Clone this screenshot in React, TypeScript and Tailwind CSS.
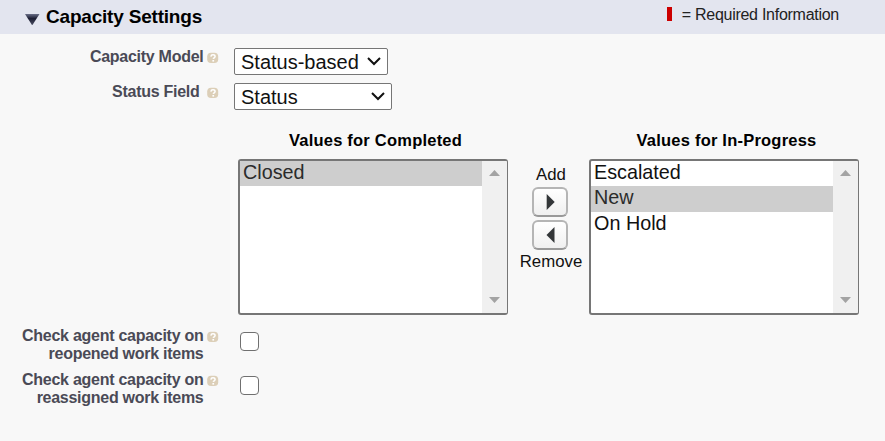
import type { ReactNode } from "react";

function Help() {
  return (
    <svg width="12" height="12" viewBox="0 0 12 12" className="block shrink-0">
      <rect x="0.2" y="0.8" width="11" height="10.2" rx="3.8" fill="#dccfb8" />
      <path d="M3.9 4.6c.1-1.2 1-1.8 2.1-1.8 1.3 0 2.1.6 2.1 1.7 0 1.3-1.7 1.3-1.8 2.4" fill="none" stroke="#fff" strokeWidth="1.5" />
      <rect x="5.4" y="8" width="1.7" height="1.6" fill="#fff" />
    </svg>
  );
}

function Label({ children }: { children: ReactNode }) {
  return (
    <div className="flex w-[219px] shrink-0 justify-end gap-[3.5px]">
      <div className="text-right text-[16px] leading-[18px] font-bold tracking-[-0.27px] whitespace-nowrap text-[#4a4a56]">{children}</div>
      <div className="mt-[4px]">
        <Help />
      </div>
    </div>
  );
}

function Select({ value, width }: { value: string; width: string }) {
  return (
    <div className={`flex h-[27px] items-center justify-between rounded-[2px] border border-[#767676] bg-white pr-[6px] pl-[6px] text-[20px] leading-[25px] text-[#111] ${width}`}>
      <span className="mt-px whitespace-nowrap">{value}</span>
      <svg width="14" height="10" viewBox="0 0 14 10" className="mb-[2px] block shrink-0">
        <path d="M1 2l6 6 6-6" fill="none" stroke="#111" strokeWidth="2" />
      </svg>
    </div>
  );
}

function ListBox({ items, selected }: { items: string[]; selected: string }) {
  return (
    <div className="flex h-[156px] w-[270px] overflow-hidden rounded-[3px] border-2 border-r border-[#767676] bg-white">
      <div className="flex-1">
        {items.map((item) => (
          <div
            key={item}
            className={`h-[25.4px] pl-[3px] text-[19.8px] leading-[23px] ${item === selected ? "bg-[#cecece] text-[#2b2b2b]" : "text-[#111]"}`}
          >
            {item}
          </div>
        ))}
      </div>
      <div className="flex w-[25px] flex-col items-center justify-between bg-[#f0f0f0] pt-[9px] pb-[10px]">
        <svg width="11" height="6" viewBox="0 0 11 6" className="block">
          <path d="M5.5 0L11 6H0z" fill="#a3a3a3" />
        </svg>
        <svg width="11" height="6" viewBox="0 0 11 6" className="block">
          <path d="M0 0h11L5.5 6z" fill="#a3a3a3" />
        </svg>
      </div>
    </div>
  );
}

function ArrowButton({ d, label }: { d: string; label: string }) {
  return (
    <button
      aria-label={label}
      className="flex h-[30px] w-[36px] items-center justify-center rounded-[6px] border-2 border-[#b5b5b5] border-b-[#999] bg-linear-to-b from-white to-[#f0f0f0]"
    >
      <svg width="10" height="16" viewBox="0 0 10 16" className="block">
        <path d={d} fill="#333638" />
      </svg>
    </button>
  );
}

function CheckRow({ first, second }: { first: string; second: string }) {
  return (
    <div className="flex h-[44px]">
      <Label>
        {first}
        <br />
        {second}
      </Label>
      <div className="mt-[5px] ml-[21px] size-[19px] rounded-[4px] border border-[#707070] bg-white" />
    </div>
  );
}

export default function App() {
  return (
    <div className="h-[441px] w-[885px] overflow-hidden bg-[#f8f8f8] font-['Liberation_Sans',Arial,sans-serif] text-black">
      <div className="flex h-[34px] justify-between bg-[#e3e5ef] pr-[46px] pl-[25px]">
        <div className="flex">
          <svg width="15" height="12" viewBox="0 0 15 12" className="mt-[13px] block">
            <defs>
              <linearGradient id="twisty" x1="0" y1="0" x2="0" y2="1">
                <stop offset="0" stopColor="#6a6f88" />
                <stop offset="0.4" stopColor="#1c1e33" />
                <stop offset="1" stopColor="#4d5065" />
              </linearGradient>
            </defs>
            <path d="M0 1h14.5L7.2 12.4z" fill="url(#twisty)" />
          </svg>
          <h3 className="mt-[6px] ml-[6px] text-[19px] leading-[21px] font-bold tracking-[-0.2px] whitespace-nowrap">Capacity Settings</h3>
        </div>
        <div className="flex">
          <div className="mt-[7px] h-[14px] w-[5px] bg-[#cc0000]" />
          <div className="mt-[5px] ml-[10px] text-[16px] leading-[19px] tracking-[-0.27px] whitespace-nowrap text-[#222]">= Required Information</div>
        </div>
      </div>
      <div className="flex h-[35px] pt-[14px]">
        <Label>Capacity Model</Label>
        <div className="ml-[15px]">
          <Select value="Status-based" width="w-[154px]" />
        </div>
      </div>
      <div className="flex h-[61px] pt-[14px]">
        <Label>
          Status Field<span className="inline-block w-[4px]" />
        </Label>
        <div className="ml-[15px]">
          <Select value="Status" width="w-[158px]" />
        </div>
      </div>
      <div className="flex h-[197px] pl-[238px]">
        <div className="w-[270px]">
          <div className="h-[29px] pl-[5px] text-center text-[16.5px] leading-[20px] font-bold tracking-[0.22px]">Values for Completed</div>
          <ListBox items={["Closed"]} selected="Closed" />
        </div>
        <div className="flex w-[81px] flex-col items-center pt-[35px] pl-[5px] text-[16.8px] leading-[20px] text-[#111]">
          <span>Add</span>
          <div className="mt-[2px] mr-[2px] mb-[2px] flex flex-col gap-[3px]">
            <ArrowButton label="Add" d="M1.7 0l8 8-8 8z" />
            <ArrowButton label="Remove" d="M9.5 0l-8 8 8 8z" />
          </div>
          <span>Remove</span>
        </div>
        <div className="w-[270px]">
          <div className="h-[29px] pl-[5px] text-center text-[16.5px] leading-[20px] font-bold tracking-[0.22px]">Values for In-Progress</div>
          <ListBox items={["Escalated", "New", "On Hold"]} selected="New" />
        </div>
      </div>
      <CheckRow first="Check agent capacity on" second="reopened work items" />
      <CheckRow first="Check agent capacity on" second="reassigned work items" />
    </div>
  );
}
